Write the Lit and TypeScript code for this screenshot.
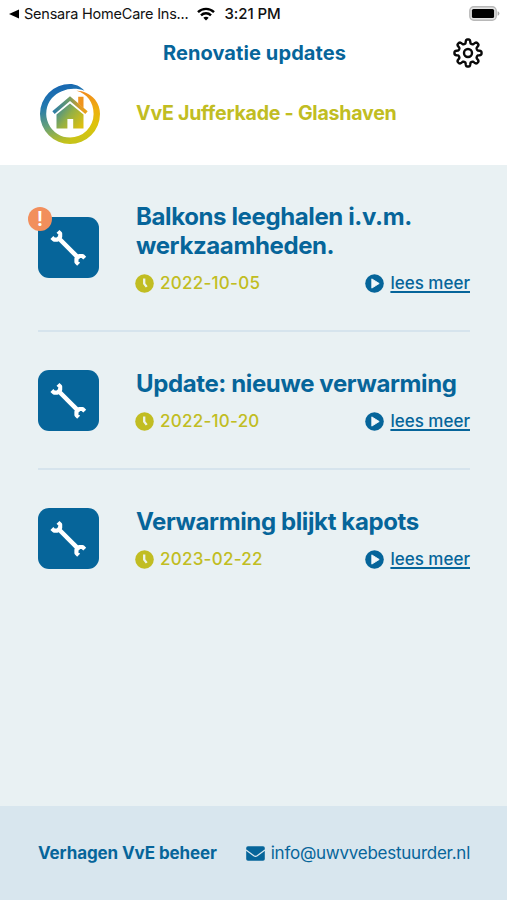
import { LitElement, html, css, nothing } from "lit";
import { customElement, property } from "lit/decorators.js";

interface Update {
  title: string;
  date: string;
  alert?: boolean;
}

const updates: Update[] = [
  { title: "Balkons leeghalen i.v.m. werkzaamheden.", date: "2022-10-05", alert: true },
  { title: "Update: nieuwe verwarming", date: "2022-10-20" },
  { title: "Verwarming blijkt kapots", date: "2023-02-22" },
];

// Outline of an eight-toothed cog with soft corners, centred on 0,0.
function cogPath(): string {
  const points: string[] = [];
  for (let i = 0; i < 160; i++) {
    const a = (i / 160) * Math.PI * 2;
    const r = 11.6 + 2 * Math.tanh(2.2 * Math.cos(8 * a));
    points.push(`${(r * Math.sin(a)).toFixed(2)} ${(-r * Math.cos(a)).toFixed(2)}`);
  }
  return `M${points.join("L")}Z`;
}

const cog = html`<svg width="30" height="30" viewBox="-15 -15 30 30" fill="none" stroke="#0a0a0a" stroke-width="2.4" stroke-linejoin="round">
  <path d=${cogPath()} /><circle r="4" />
</svg>`;

const wifi = html`<svg width="18" height="14" viewBox="0 0 18 14" fill="none" stroke="#000" stroke-width="2.4">
  <path d="M1 5.2C5.4 .8 12.6 .8 17 5.2" /><path d="M4 8.4C6.8 5.6 11.2 5.6 14 8.4" />
  <path d="M6.3 10.8C7.8 9.4 10.2 9.4 11.7 10.8L9 13.5Z" fill="#000" stroke="none" />
</svg>`;

const battery = html`<svg width="31" height="15" viewBox="0 0 31 15">
  <rect x=".8" y=".8" width="26.4" height="13.4" rx="4" fill="#e4e4e4" stroke="#b8b8b8" stroke-width="1.4" />
  <rect x="2.9" y="2.9" width="22.2" height="9.2" rx="1.6" fill="#000" />
  <path d="M28.6 5.2Q30.4 5.8 30.4 7.5T28.6 9.8Z" fill="#aaa" />
</svg>`;

const logo = html`<svg width="62" height="62" viewBox="0 0 62 62">
  <defs>
    <linearGradient id="warm" x1="0" y1="8" x2="0" y2="61" gradientUnits="userSpaceOnUse">
      <stop offset="0" stop-color="#f08a1c" /><stop offset=".35" stop-color="#eeb010" />
      <stop offset=".65" stop-color="#dcc40c" /><stop offset="1" stop-color="#c5c31a" />
    </linearGradient>
    <linearGradient id="cool" x1="8" y1="5" x2="24" y2="60" gradientUnits="userSpaceOnUse">
      <stop offset="0" stop-color="#1766b2" /><stop offset=".3" stop-color="#2379ae" />
      <stop offset=".65" stop-color="#65a079" /><stop offset="1" stop-color="#c5c31a" />
    </linearGradient>
    <linearGradient id="house" x1="16" y1="24" x2="42" y2="44" gradientUnits="userSpaceOnUse">
      <stop offset="0" stop-color="#2e84a6" /><stop offset=".5" stop-color="#94b045" />
      <stop offset="1" stop-color="#dcc010" />
    </linearGradient>
    <linearGradient id="roof" x1="13" y1="30" x2="49" y2="26" gradientUnits="userSpaceOnUse">
      <stop offset="0" stop-color="#2679ae" /><stop offset=".5" stop-color="#6b9c68" />
      <stop offset=".8" stop-color="#e29a22" /><stop offset="1" stop-color="#eca515" />
    </linearGradient>
  </defs>
  <path fill="url(#cool)" d="M45.5 7.7C41 3 36 1 31 1A30 30 0 0 0 31 61V54.6A24 24 0 0 1 13 15C21 6.5 34 3.2 45.5 7.7Z" />
  <path fill="url(#warm)" d="M37.5 7.8C43 7.5 51 10.5 56 16.5C59.5 21 61 26 61 31A30 30 0 0 1 30.9 61V54.6A23.8 23.8 0 0 0 54.6 31C54.6 19.5 48 10.5 37.5 7.8Z" />
  <path d="M14.5 29.6L31 15.6L47.5 29.6" fill="none" stroke="url(#roof)" stroke-width="3.6" />
  <path d="M39.2 13.8H44.5V25L39.2 20.4Z" fill="#ef941d" />
  <path d="M17.5 31.6L31 20.4L44.5 31.6V45.5H34.2V36H28.4V45.5H17.5Z" fill="url(#house)" />
</svg>`;

const wrench = html`<svg width="61" height="61" viewBox="0 0 61 61">
  <g transform="translate(30.3 30.8) rotate(45) scale(.9)" fill="none" stroke="#fff">
    <path d="M-15 0H15" stroke-width="5" />
    <path d="M-21 -4.8H-17.6L-15 -2.2V2.2L-17.6 4.8H-21" stroke-width="4.6" stroke-linejoin="round" />
    <path d="M21 -4.8H17.6L15 -2.2V2.2L17.6 4.8H21" stroke-width="4.6" stroke-linejoin="round" />
  </g>
</svg>`;

const clock = html`<svg width="19" height="19" viewBox="0 0 19 19">
  <circle cx="9.5" cy="9.5" r="9.3" fill="#c1bd22" />
  <path d="M9.2 4.6V9.6L11.7 12.9" fill="none" stroke="#eef4ea" stroke-width="2.3" />
</svg>`;

const play = html`<svg width="19" height="19" viewBox="0 0 19 19">
  <circle cx="9.5" cy="9.5" r="9.3" fill="#06659a" />
  <path d="M6.8 4.9L14.2 9.5L6.8 14.1Z" fill="#f2f8fa" stroke="#f2f8fa" stroke-width=".9" stroke-linejoin="round" />
</svg>`;

const envelope = html`<svg width="19" height="15" viewBox="0 0 19 15">
  <rect x=".2" y=".3" width="18.6" height="14.4" rx="1.8" fill="#06659a" />
  <path d="M0 4L7.8 9.8Q9.5 10.9 11.2 9.8L19 4" fill="none" stroke="#d8e6ee" stroke-width="1.3" />
</svg>`;

@customElement("update-item")
class UpdateItem extends LitElement {
  @property({ attribute: false }) item!: Update;

  static styles = css`
    :host { display: flex; align-items: center; gap: 37px; padding: 37px 0; }
    .tile { position: relative; width: 61px; height: 61px; flex: none; border-radius: 11px; background: #06659a; }
    .tile svg { display: block; }
    .badge {
      position: absolute; left: -10px; top: -10px; width: 24px; height: 24px; border-radius: 50%;
      background: #f28f5c; display: flex; align-items: center; justify-content: center;
      color: #fff; font-weight: 600; font-size: 20px; line-height: 24px;
    }
    .body { flex: 1; min-width: 0; }
    .title { margin: 0; font-size: 24px; font-weight: 650; line-height: 29px; color: #06659a; letter-spacing: -0.38px; }
    .meta { display: flex; justify-content: space-between; align-items: center; height: 20px; margin-top: 13px; }
    .date, .more { display: flex; align-items: center; font-size: 17px; line-height: 20px; font-weight: 500; }
    .date { gap: 6px; margin-left: -1px; color: #c1bd22; letter-spacing: 0.25px; }
    .more { gap: 6px; color: #06659a; }
    .link { color: inherit; text-decoration: underline; text-decoration-thickness: 1.5px; text-underline-offset: 2px; text-decoration-skip-ink: none; }
  `;

  render() {
    return html`
      <div class="tile">${wrench}${this.item.alert ? html`<span class="badge">!</span>` : nothing}</div>
      <div class="body">
        <h2 class="title">${this.item.title}</h2>
        <div class="meta">
          <span class="date">${clock}<span>${this.item.date}</span></span>
          <span class="more">${play}<a class="link">lees meer</a></span>
        </div>
      </div>
    `;
  }
}

@customElement("app-root")
class AppRoot extends LitElement {
  static styles = css`
    :host {
      display: flex; flex-direction: column; height: 900px; width: 100%;
      font-family: Inter, "Liberation Sans", sans-serif; background: #e9f1f3; color: #06659a;
    }
    .status { height: 27px; display: flex; align-items: center; padding: 0 7px 0 9px; background: #fff; color: #111; font-size: 14.5px; }
    .back { display: flex; margin-right: 5px; }
    .from { letter-spacing: -0.22px; }
    .wifi { display: flex; margin-left: 8px; }
    .time { margin-left: 10px; font-weight: 500; font-size: 15px; letter-spacing: -0.1px; }
    .battery { display: flex; margin-left: auto; }
    .bar { height: 51px; display: grid; grid-template-columns: 1fr auto 1fr; align-items: center; padding: 0 24px 0 26px; background: #fff; }
    .heading { grid-column: 2; margin: 0; font-size: 20px; font-weight: 650; letter-spacing: 0.1px; }
    .settings { justify-self: end; display: flex; }
    .brand { height: 87px; box-sizing: border-box; display: flex; align-items: flex-start; gap: 35px; padding: 5px 39px 0; background: #fff; }
    .name { font-size: 19.6px; font-weight: 650; line-height: 60px; color: #c1bd22; letter-spacing: -0.25px; }
    .list { flex: 1; padding: 0 37px 0 38px; }
    .entry + .entry { border-top: 2px solid #d6e4ed; }
    .entry:first-child { padding-bottom: 37px; }
    .footer { height: 94px; display: flex; justify-content: space-between; align-items: center; padding: 0 37px 0 38px; background: #d8e6ee; font-size: 17px; }
    .company { font-weight: 650; letter-spacing: -0.1px; }
    .mail { display: flex; align-items: center; gap: 6px; }
    .address { letter-spacing: -0.25px; }
  `;

  render() {
    return html`
      <div class="status">
        <span class="back"><svg width="10" height="10" viewBox="0 0 10 10"><path d="M0 5L10 .6V9.4Z" /></svg></span>
        <span class="from">Sensara HomeCare Ins...</span>
        <span class="wifi">${wifi}</span>
        <span class="time">3:21 PM</span>
        <span class="battery">${battery}</span>
      </div>
      <div class="bar"><h1 class="heading">Renovatie updates</h1><span class="settings">${cog}</span></div>
      <div class="brand">${logo}<span class="name">VvE Jufferkade - Glashaven</span></div>
      <div class="list">${updates.map((u) => html`<update-item class="entry" .item=${u}></update-item>`)}</div>
      <div class="footer">
        <span class="company">Verhagen VvE beheer</span>
        <span class="mail">${envelope}<span class="address">info@uwvvebestuurder.nl</span></span>
      </div>
    `;
  }
}
